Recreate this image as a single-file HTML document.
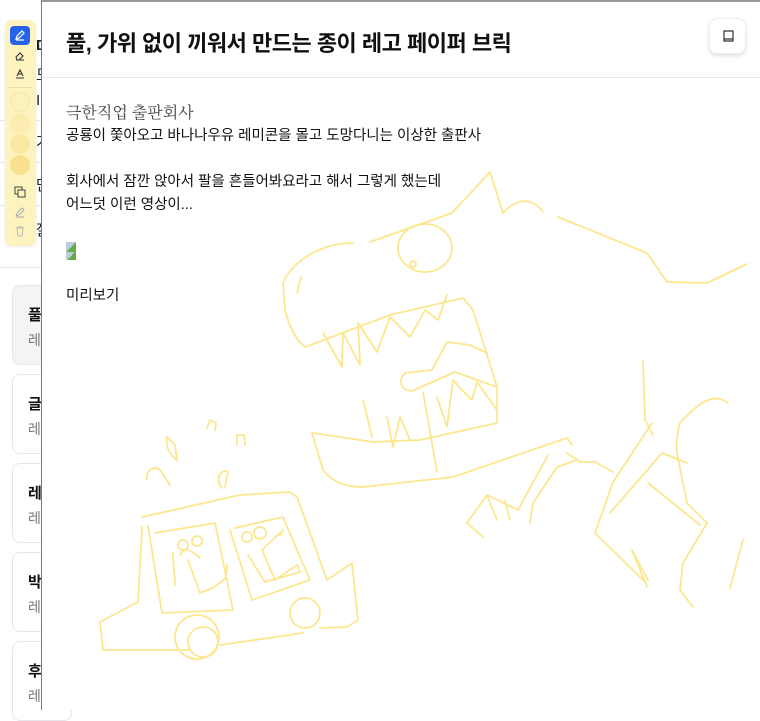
<!DOCTYPE html>
<html><head><meta charset="utf-8"><style>
*{box-sizing:border-box;margin:0;padding:0}
body{width:760px;height:710px;overflow:hidden;background:#fff;font-family:"Liberation Sans","Noto Sans CJK KR",sans-serif;position:relative;color:#111}
.bg{position:absolute;left:0;top:0;width:42px;height:710px;background:#fff}
.bt{position:absolute;left:36px;font-size:15px;color:#222}
.card{position:absolute;left:12px;width:60px;border:1px solid #e5e7eb;border-radius:8px;background:#fff}
.card b{position:absolute;left:15px;top:18px;font-size:15px}
.card i{position:absolute;left:15px;top:44px;font-size:14px;color:#777;font-style:normal}
.modal{position:absolute;left:41px;top:0;width:719px;height:710px;background:#fff;border-left:1.5px solid #777;border-top:2px solid #999}
.hdr{height:76px;border-bottom:1px solid #e8e8e8;position:relative}
.hdr h1{position:absolute;left:24px;top:24px;font-size:22px;font-weight:700;letter-spacing:-0.5px;color:#111}
.btn{position:absolute;left:667px;top:16px;width:37px;height:36px;border:1px solid #eee;border-radius:8px;box-shadow:0 2px 4px rgba(0,0,0,.12);background:#fff}
.body{position:absolute;left:24px;top:100px;font-size:14.5px;line-height:23px;color:#111}
.tb{position:absolute;left:5px;top:20px;width:31px;height:226px;background:#fdf3be;border-radius:7px;box-shadow:0 1px 3px rgba(0,0,0,.08)}
.dot{position:absolute;left:5px;width:20px;height:20px;border-radius:50%}
</style></head><body>
<div class="bg"></div>
<div class="bt" style="top:37px;font-weight:700">D</div>
<div class="bt" style="top:64px">도</div>
<div class="bt" style="top:92px">I</div>
<div style="position:absolute;left:0;top:120px;width:42px;height:1px;background:#e5e7eb"></div>
<div class="bt" style="top:131px">가</div>
<div style="position:absolute;left:0;top:162px;width:42px;height:1px;background:#e5e7eb"></div>
<div class="bt" style="top:174px">단</div>
<div style="position:absolute;left:0;top:205px;width:42px;height:1px;background:#e5e7eb"></div>
<div class="bt" style="top:219px">잘</div>
<div style="position:absolute;left:0;top:267px;width:42px;height:1px;background:#e5e7eb"></div>
<div class="card" style="top:285px;height:80px;background:#f3f4f6"><b>풀</b><i>레</i></div>
<div class="card" style="top:374px;height:80px"><b>글</b><i>레</i></div>
<div class="card" style="top:463px;height:80px"><b>레</b><i>레</i></div>
<div class="card" style="top:552px;height:80px"><b>박</b><i>레</i></div>
<div class="card" style="top:641px;height:80px"><b>후</b><i>레</i></div>

<div class="tb">
 <div style="position:absolute;left:5px;top:6px;width:20px;height:19px;background:#2563eb;border-radius:4px"><svg width="20" height="19" viewBox="0 0 20 19"><path d="M6 13l1-3 5-5 2 2-5 5z M6 14h8" stroke="#fff" stroke-width="1.2" fill="none"/></svg></div>
 <svg style="position:absolute;left:8px;top:30px" width="14" height="12" viewBox="0 0 14 12"><path d="M3 7l4-4 3 3-4 4H4z M3 10h8" stroke="#333" stroke-width="1.1" fill="none"/></svg>
 <svg style="position:absolute;left:8px;top:48px" width="14" height="12" viewBox="0 0 14 12"><path d="M4 8l3-6 3 6 M5 6h4 M3 10h8" stroke="#333" stroke-width="1.1" fill="none"/></svg>
 <div style="position:absolute;left:4px;top:67px;width:23px;border-top:1px dotted #d8cc90"></div>
 <div class="dot" style="top:72px;background:#fcf1b8;border:1px solid #f5e8a8"></div>
 <div class="dot" style="top:93px;background:#fcecb0"></div>
 <div class="dot" style="top:114px;background:#fbe8a5"></div>
 <div class="dot" style="top:135px;background:#f9e08f"></div>
 <svg style="position:absolute;left:8px;top:166px" width="14" height="12" viewBox="0 0 14 12"><rect x="2" y="1" width="7" height="7" fill="none" stroke="#444"/><rect x="5" y="4" width="7" height="7" fill="#fdf3be" stroke="#444"/></svg>
 <svg style="position:absolute;left:8px;top:186px" width="14" height="12" viewBox="0 0 14 12"><path d="M3 10l1-3 5-5 2 2-5 5z M3 11h8" stroke="#aaa" fill="none"/></svg>
 <svg style="position:absolute;left:8px;top:205px" width="14" height="12" viewBox="0 0 14 12"><path d="M3 3h8 M5 3V2h4v1 M4 3l1 8h4l1-8" stroke="#bbb" fill="none"/></svg>
</div>

<div class="modal">
 <div class="hdr"><h1>풀, 가위 없이 끼워서 만드는 종이 레고 페이퍼 브릭</h1>
  <div class="btn"><svg width="37" height="36" viewBox="0 0 37 36"><path d="M14 12h9v10h-9z M14 20h9" stroke="#333" stroke-width="1.2" fill="none"/></svg></div>
 </div>
 <div class="body">
  <div style="font-family:'Liberation Serif','Noto Serif CJK SC',serif;color:#444;font-size:16px">극한직업 출판회사</div>
  <div>공룡이 쫓아오고 바나나우유 레미콘을 몰고 도망다니는 이상한 출판사</div>
  <div>&nbsp;</div>
  <div>회사에서 잠깐 앉아서 팔을 흔들어봐요라고 해서 그렇게 했는데</div>
  <div>어느덧 이런 영상이...</div>
  <div style="height:68px;padding-top:25px"><div style="width:10px;height:10px;background:linear-gradient(135deg,#bcd 50%,#6a4 50%)"></div><div style="width:10px;height:8px;background:linear-gradient(135deg,#bcd 50%,#6a4 50%)"></div></div>
  <div>미리보기</div>
 </div>
</div>

<svg style="position:absolute;left:0;top:0" width="760" height="710" viewBox="0 0 760 710" fill="none" stroke="#fce78e" stroke-width="1.8" stroke-linecap="round" stroke-linejoin="round">
<path d="M353 243C320 243 292 262 283 283L285 310C290 330 298 342 305 347L390 315L463 298L473 310"/>
<path d="M370 242L452 213L490 172L503 213C515 200 530 195 543 212"/>
<path d="M558 217L647 253L667 282L707 283L747 264"/>
<ellipse cx="425" cy="248" rx="27" ry="24"/>
<circle cx="413" cy="264" r="3"/>
<path d="M301 277L297 293"/>
<path d="M312 433L323 470C335 485 350 487 363 487L453 477L567 438L572 445"/>
<path d="M473 310L497 387L497 423L420 440L373 442L313 433"/>
<path d="M487 353L470 345L447 342L432 370L405 373C398 380 400 390 412 391L455 372L497 387"/>
<path d="M323 333L342 367L343 333L360 365L358 323L377 352L390 317L410 337L425 310L438 320L447 295"/>
<path d="M363 400L372 437 M387 417L393 447L400 417L410 440 M423 392L437 472 M437 397L447 427L453 380L462 390L472 400L477 382L497 410"/>
<path d="M548 455L518 510L487 495L467 523L483 537 M487 495L497 520 M505 500L510 520"/>
<path d="M567 453L580 462L595 462L613 472 M577 460L557 467L533 503L530 523"/>
<path d="M643 360L645 420L653 435 M652 423L613 482L595 533L643 580 M647 587L632 550L648 580"/>
<path d="M610 513L662 453L687 463"/>
<path d="M728 403C718 395 705 395 680 423C675 440 677 453 677 453L687 503L707 523L683 563L680 590L693 607"/>
<path d="M648 483L700 525"/>
<path d="M743 540L730 588"/>
<path d="M142 517L240 495L290 492L297 497L327 580L352 563L358 620L347 627L320 628"/>
<path d="M303 633L220 645"/>
<circle cx="197" cy="637" r="22"/><circle cx="203" cy="642" r="15"/>
<circle cx="305" cy="613" r="15"/>
<path d="M142 527L138 602L100 622L103 650L190 650"/>
<path d="M148 526L162 613L233 610L215 523L155 533"/>
<path d="M230 530L252 600L310 580L283 517L235 528"/>
<path d="M188 560L200 593L213 588L226 578L227 565M200 558C190 550 185 545 180 555M173 552C172 560 175 570 175 585"/>
<path d="M248 555L265 582L300 572L297 565L275 580L262 550L283 530L280 535"/>
<circle cx="183" cy="545" r="5"/><circle cx="197" cy="541" r="5"/>
<circle cx="247" cy="537" r="5"/><circle cx="260" cy="533" r="6"/>
<path d="M147 480C145 470 155 465 160 470L170 485"/>
<path d="M167 437C165 447 170 455 177 460L175 445L167 437"/>
<path d="M207 428L210 420L216 423L215 430"/>
<path d="M237 445L237 435L244 435L245 445"/>
<path d="M222 488C215 480 220 468 228 472L225 487"/>
</svg>
</body></html>
